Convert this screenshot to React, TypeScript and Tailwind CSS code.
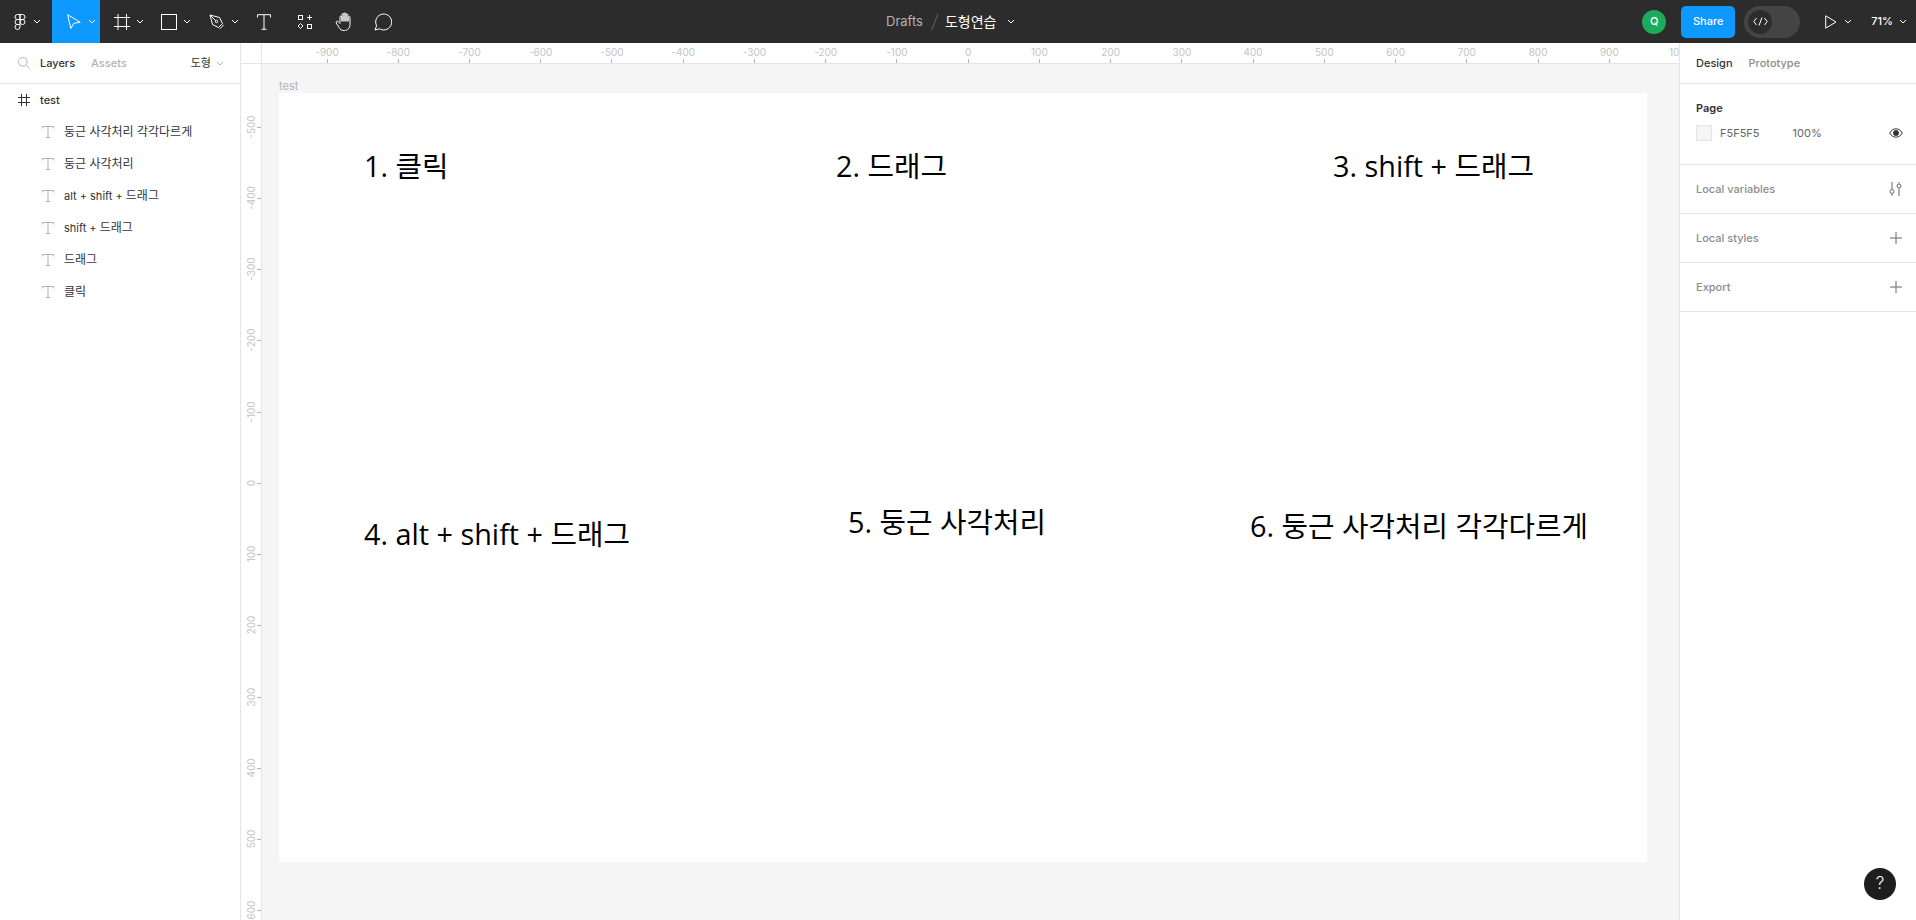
import React from 'react';

const UI_FONT = "font-['Inter','Noto_Sans_CJK_KR',sans-serif]";

const Ko = ({ children }: { children: React.ReactNode }) => <span className="text-[12px]">{children}</span>;

const layers = [
  { id: 'l6', node: <Ko>둥근 사각처리 각각다르게</Ko> },
  { id: 'l5', node: <Ko>둥근 사각처리</Ko> },
  { id: 'l4', node: <>alt + shift + <Ko>드래그</Ko></> },
  { id: 'l3', node: <>shift + <Ko>드래그</Ko></> },
  { id: 'l2', node: <Ko>드래그</Ko> },
  { id: 'l1', node: <Ko>클릭</Ko> },
];

const frameTexts = [
  { label: '1. 클릭', x: 85, y: 73 },
  { label: '2. 드래그', x: 557, y: 73 },
  { label: '3. shift + 드래그', x: 1054, y: 73 },
  { label: '4. alt + shift + 드래그', x: 85, y: 441 },
  { label: '5. 둥근 사각처리', x: 569, y: 429 },
  { label: '6. 둥근 사각처리 각각다르게', x: 971, y: 433 },
];

const hTicks = Array.from({ length: 20 }, (_, i) => -900 + i * 100);
const vTicks = Array.from({ length: 12 }, (_, i) => -500 + i * 100);

const Chevron = ({ className = 'text-white' }: { className?: string }) => (
  <svg width="8" height="5" viewBox="0 0 8 5" fill="none" stroke="currentColor" className={className}>
    <path d="M1 1l3 3 3-3" />
  </svg>
);

const TextIcon = () => (
  <svg width="12" height="12" viewBox="0 0 12 12" fill="none" stroke="#b3b3b3">
    <path d="M.5 2.5v-2h11v2M6 .5v11M4 11.5h4" />
  </svg>
);

const Toolbar = () => (
  <header className="flex h-[43px] shrink-0 items-center bg-[#2c2c2c] text-white">
    <div className="flex h-full w-[52px] items-center pl-[14px]">
      <svg width="12" height="16" viewBox="0 0 12 16" fill="none" stroke="white">
        <path d="M6 .5H3.5a2.5 2.5 0 0 0 0 5H6zM6 .5h2.5a2.5 2.5 0 0 1 0 5H6zM6 5.5H3.5a2.5 2.5 0 0 0 0 5H6z" />
        <circle cx="8.5" cy="8" r="2.5" />
        <path d="M3.5 10.5H6V13a2.5 2.5 0 1 1-2.5-2.5z" />
      </svg>
      <span className="ml-[7px]"><Chevron /></span>
    </div>
    <div className="flex h-full w-[48px] items-center bg-[#0d99ff] pl-[15px]">
      <svg width="14" height="15" viewBox="0 0 14 15" fill="none" stroke="white">
        <path d="M.7.7l12.5 7.6-6.4 1-3 5.2z" />
      </svg>
      <span className="ml-[7px]"><Chevron /></span>
    </div>
    <div className="flex h-full w-[48px] items-center pl-[14px]">
      <svg width="16" height="16" viewBox="0 0 16 16" fill="none" stroke="white">
        <path d="M4 0v16M12.5 0v16M0 3.5h16M0 12.500h16" />
      </svg>
      <span className="ml-[6px]"><Chevron /></span>
    </div>
    <div className="flex h-full w-[48px] items-center pl-[13px]">
      <svg width="16" height="16" viewBox="0 0 16 16" fill="none" stroke="white">
        <rect x=".5" y=".5" width="15" height="15" />
      </svg>
      <span className="ml-[6px]"><Chevron /></span>
    </div>
    <div className="flex h-full w-[48px] items-center pl-[13px]">
      <svg width="16" height="16" viewBox="0 0 16 16" fill="none" stroke="white">
        <path d="M1 1l9.500 2.500 3 6-4 4-6-3zM1 1l5.800 5.800M10.800 14.800l4-4" />
        <circle cx="7.500" cy="7.500" r="1.200" />
      </svg>
      <span className="ml-[6px]"><Chevron /></span>
    </div>
    <div className="flex h-full w-[41px] items-center pl-[13px]">
      <svg width="14" height="16" viewBox="0 0 14 16" fill="none" stroke="white">
        <path d="M.5 3.500V.7h13v2.800M7 .7v14.600M4.500 15.300h5" />
      </svg>
    </div>
    <div className="flex h-full w-[38px] items-center pl-[13px]">
      <svg width="14" height="14" viewBox="0 0 14 14" fill="none" stroke="white">
        <rect x=".5" y=".5" width="4" height="4" />
        <rect x="9.500" y="9.500" width="4" height="4" />
        <path d="M11.500 0v5M9 2.500h5M2.500 8.500l2.500 2.500-2.500 2.500L0 11z" />
      </svg>
    </div>
    <div className="flex h-full w-[39px] items-center pl-[12px]">
      <svg width="18" height="19" viewBox="0 0 18 19" fill="none" stroke="white" strokeLinejoin="round" strokeLinecap="round">
        <path d="M5 10V5a1 1 0 0 1 2 0v4M7 9V2.500a1 1 0 0 1 2 0V9M9 9V2a1 1 0 0 1 2 0v7M11 9V3a1 1 0 0 1 2 0v6M13 9V5.500a1 1 0 0 1 2 0v7c0 3.500-2.500 6-5.500 6H9c-2.500 0-3.700-1-5-3L1.200 11c-.8-1.500 1.200-2.500 2.200-1.300L5 11.500" />
      </svg>
    </div>
    <div className="flex h-full items-center pl-[12px]">
      <svg width="18" height="18" viewBox="0 0 18 18" fill="none" stroke="white">
        <path d="M1 17l1.600-4.300A8 8 0 1 1 5.500 15.800z" strokeLinejoin="round" />
      </svg>
    </div>

    <div className="flex flex-1 items-center pl-[494px] text-[13px]">
      <span className="text-[#b3b3b3]">Drafts</span>
      <svg width="9" height="18" viewBox="0 0 9 18" className="ml-[7px]" stroke="#666" fill="none">
        <path d="M8 1L1.500 17" />
      </svg>
      <span className="ml-[6px] text-[14px]">도형연습</span>
      <span className="ml-[11px]"><Chevron /></span>
    </div>

    <div className="flex h-[24px] w-[24px] items-center justify-center rounded-full bg-[#1bab5c] text-[11px] font-medium">Q</div>
    <button className="ml-[15px] h-[32px] w-[54px] rounded-[5px] bg-[#0d99ff] text-[11px] font-medium text-white">Share</button>
    <div className="ml-[9px] flex h-[32px] w-[56px] items-center rounded-full bg-[#444444] pl-[4px]">
      <div className="flex h-[24px] w-[24px] items-center justify-center rounded-full bg-[#2c2c2c]">
        <svg width="15" height="9" viewBox="0 0 15 9" fill="none" stroke="white">
          <path d="M3.500 1L.8 4.500 3.500 8M11.500 1l2.700 3.500L11.500 8M9 .5L6 8.500" />
        </svg>
      </div>
    </div>
    <div className="ml-[25px] flex items-center">
      <svg width="12" height="14" viewBox="0 0 12 14" fill="none" stroke="white">
        <path d="M.7.800L11 7 .7 13.200z" />
      </svg>
      <span className="ml-[7px]"><Chevron /></span>
    </div>
    <span className="ml-[19px] text-[11px] font-medium">71%</span>
    <span className="ml-[6px] mr-[9px]"><Chevron /></span>
  </header>
);

const LeftPanel = () => (
  <aside className="flex w-[241px] shrink-0 flex-col border-r border-[#e5e5e5] bg-white text-[11px]">
    <div className="flex h-[41px] shrink-0 items-center border-b border-[#e5e5e5] pl-[18px] pr-[16px]">
      <svg width="12" height="12" viewBox="0 0 12 12" fill="none" stroke="#b3b3b3">
        <circle cx="4.800" cy="4.800" r="4.300" />
        <path d="M8 8l3.700 3.700" />
      </svg>
      <span className="ml-[10px] font-medium text-[#333333]">Layers</span>
      <span className="ml-[16px] font-medium text-[#b3b3b3]">Assets</span>
      <span className="ml-auto text-[#333333]">도형</span>
      <span className="ml-[5px]"><Chevron className="text-[#b3b3b3]" /></span>
    </div>
    <div className="flex h-[32px] items-center pl-[18px]">
      <svg width="12" height="12" viewBox="0 0 12 12" fill="none" stroke="#333333">
        <path d="M3.500 0v12M8.500 0v12M0 3.500h12M0 8.500h12" />
      </svg>
      <span className="ml-[10px] font-medium text-[#333333]">test</span>
    </div>
    {layers.map((l) => (
      <div key={l.id} className="flex h-[32px] items-center pl-[42px] text-[#333333]">
        <TextIcon />
        <span className="ml-[10px] whitespace-nowrap">{l.node}</span>
      </div>
    ))}
  </aside>
);

const HorizontalRuler = () => (
  <div className="flex h-[21px] shrink-0 border-b border-[#e5e5e5] bg-white">
    <div className="w-[21px] shrink-0 border-r border-[#e5e5e5]" />
    <div className="relative flex-1 overflow-hidden">
      {hTicks.map((v, i) => (
        <div key={v} className="absolute top-0 flex h-full w-[40px] flex-col items-center" style={{ left: 65 + i * 71.24 - 20 }}>
          <span className="pt-[2px] text-[10px] leading-[14px] text-[#c4c4c4]">{v}</span>
          <span className="mt-auto h-[4px] w-px bg-[#b3b3b3]" />
        </div>
      ))}
    </div>
  </div>
);

const VerticalRuler = () => (
  <div className="relative w-[21px] shrink-0 overflow-hidden border-r border-[#e5e5e5] bg-white">
    {vTicks.map((v, i) => (
      <div key={v} className="absolute left-0 h-[40px] w-full" style={{ top: 62.5 + i * 71.27 - 20 }}>
        <span className="absolute left-[-10px] top-[13px] w-[40px] -rotate-90 text-center text-[10px] leading-[14px] text-[#c4c4c4]">{v}</span>
        <span className="absolute right-0 top-[20px] h-px w-[4px] bg-[#b3b3b3]" />
      </div>
    ))}
  </div>
);

const Canvas = () => (
  <main className="relative flex-1 overflow-hidden bg-[#f5f5f5]">
    <span className="absolute left-[17px] top-[15px] text-[11px] leading-[14px] text-[#b3b3b3]">test</span>
    <div className="absolute left-[17px] top-[29px] h-[769px] w-[1368px] bg-white text-[28.8px] leading-[40px] text-black font-['Open_Sans','Noto_Sans_CJK_KR',sans-serif]">
      {frameTexts.map((t) => (
        <span key={t.label} className="absolute whitespace-nowrap" style={{ left: t.x, top: t.y - 20 }}>{t.label}</span>
      ))}
    </div>
  </main>
);

const Section = ({ title, children }: { title: string; children: React.ReactNode }) => (
  <div className="flex h-[49px] items-center justify-between border-b border-[#e5e5e5] pl-[16px] pr-[14px]">
    <span className="font-medium text-[#8c8c8c]">{title}</span>
    {children}
  </div>
);

const Plus = () => (
  <svg width="12" height="12" viewBox="0 0 12 12" stroke="#666666">
    <path d="M6 0v12M0 6h12" />
  </svg>
);

const RightPanel = () => (
  <aside className="flex w-[237px] shrink-0 flex-col border-l border-[#e5e5e5] bg-white text-[11px]">
    <div className="flex h-[41px] shrink-0 items-center border-b border-[#e5e5e5] pl-[16px]">
      <span className="font-medium text-[#333333]">Design</span>
      <span className="ml-[16px] font-medium text-[#8c8c8c]">Prototype</span>
    </div>
    <div className="h-[81px] border-b border-[#e5e5e5] pl-[16px] pr-[13px]">
      <div className="pt-[17px] font-semibold leading-[14px] text-[#333333]">Page</div>
      <div className="mt-[10px] flex items-center text-[#666666]">
        <span className="h-[16px] w-[16px] border border-[#e5e5e5] bg-[#f5f5f5]" />
        <span className="ml-[8px]">F5F5F5</span>
        <span className="ml-[33px]">100%</span>
        <svg width="14" height="10" viewBox="0 0 14 10" fill="none" stroke="#333333" className="ml-auto">
          <path d="M.7 5C2.200 2.200 4.500.8 7 .8s4.800 1.400 6.300 4.200C11.800 7.800 9.500 9.200 7 9.200S2.200 7.800.7 5z" />
          <circle cx="7" cy="5" r="2.500" fill="#333333" />
        </svg>
      </div>
    </div>
    <Section title="Local variables">
      <svg width="13" height="14" viewBox="0 0 13 14" fill="none" stroke="#666666">
        <path d="M3 0v7M3 12v2M10 0v1.500M10 6.500V14" />
        <circle cx="3" cy="9.500" r="2" />
        <circle cx="10" cy="4" r="2" />
      </svg>
    </Section>
    <Section title="Local styles"><Plus /></Section>
    <Section title="Export"><Plus /></Section>
  </aside>
);

export default function App() {
  return (
    <div className={`flex h-screen w-full flex-col overflow-hidden ${UI_FONT}`}>
      <Toolbar />
      <div className="relative flex min-h-0 flex-1">
        <LeftPanel />
        <div className="flex min-w-0 flex-1 flex-col">
          <HorizontalRuler />
          <div className="flex min-h-0 flex-1">
            <VerticalRuler />
            <Canvas />
          </div>
        </div>
        <RightPanel />
        <button className="absolute bottom-[20px] right-[20px] flex h-[32px] w-[32px] items-center justify-center rounded-full bg-[#1e1e1e] text-[17px] font-light text-white">?</button>
      </div>
    </div>
  );
}
